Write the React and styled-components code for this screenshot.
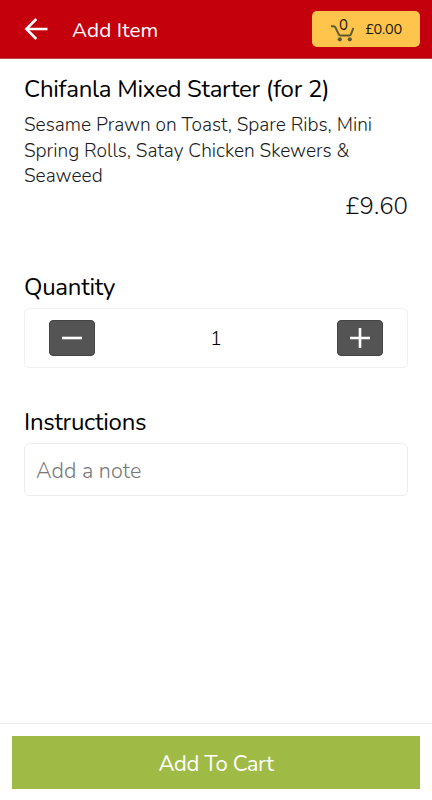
import { useState } from "react";
import styled, { createGlobalStyle } from "styled-components";

const GlobalStyle = createGlobalStyle`
    * {
        box-sizing: border-box;
    }
    body {
        margin: 0;
        background-color: #fff;
        color: #000;
        font-family: Nunito, "Open Sans", "Noto Sans", sans-serif;
    }
    button, input {
        font-family: inherit;
    }
`
const Page = styled.div`
    width: 100%;
    height: 100vh;
    display: flex;
    flex-direction: column;
    background-color: #fff;
`
const Header = styled.header`
    height: 59px;
    padding: 0 12px 0 24px;
    display: flex;
    align-items: center;
    background-color: #c4000c;
    border-bottom: 1px solid #b8453f;
`
const BackButton = styled.button`
    width: 24px;
    height: 24px;
    padding: 0;
    border: none;
    background: none;
    cursor: pointer;
    svg {
        display: block;
    }
`
const HeaderTitle = styled.h1`
    flex: 1;
    margin: 1px 0 0 24px;
    font-size: 20.7px;
    font-weight: 400;
    line-height: 28px;
    letter-spacing: 0.1px;
    color: #fff;
`
const CartButton = styled.button`
    width: 108px;
    height: 36px;
    padding: 0 18px 0 19px;
    display: flex;
    align-items: center;
    justify-content: space-between;
    border: none;
    border-radius: 5px;
    background-color: #ffc44c;
    color: #1c1a10;
    cursor: pointer;
`
const CartIcon = styled.span`
    position: relative;
    width: 24px;
    height: 32px;
    svg {
        display: block;
    }
`
const CartCount = styled.span`
    position: absolute;
    top: 3px;
    left: 0;
    width: 25px;
    text-align: center;
    font-size: 15px;
    line-height: 18px;
`
const CartTotal = styled.span`
    margin-top: -1px;
    font-size: 14.5px;
    line-height: 20px;
    letter-spacing: -0.25px;
    white-space: nowrap;
`
const Content = styled.main`
    flex: 1;
    padding: 14px 24px 0;
`
const SectionTitle = styled.h2`
    margin: 0;
    font-size: 24px;
    font-weight: 400;
    line-height: 32px;
    letter-spacing: -0.26px;
    white-space: nowrap;
`
const Description = styled.p`
    margin: 8px 0 0;
    font-size: 19.15px;
    font-weight: 300;
    line-height: 25.6px;
    color: #1b1b1b;
    span {
        display: block;
        white-space: nowrap;
    }
`
const Price = styled.div`
    text-align: right;
    font-size: 24px;
    font-weight: 300;
    line-height: 32px;
    color: #111;
`
const Section = styled.section`
    margin-top: ${({ $gap }) => $gap};
`
const Stepper = styled.div`
    height: 60px;
    margin-top: 5px;
    padding: 0 24px;
    display: flex;
    align-items: center;
    justify-content: space-between;
    border: 1px solid #f1f1f1;
    border-radius: 5px;
`
const StepButton = styled.button`
    width: 46px;
    height: 36px;
    padding: 1px 0 0;
    display: flex;
    align-items: center;
    justify-content: center;
    border: 1px solid #444;
    border-radius: 4px;
    background-color: #545454;
    cursor: pointer;
`
const Quantity = styled.span`
    margin-top: 3px;
    font-size: 20px;
    font-weight: 300;
    line-height: 28px;
`
const NoteInput = styled.input`
    display: block;
    width: 100%;
    height: 53px;
    margin-top: 5px;
    padding: 4px 11px 0;
    border: 1px solid #ececec;
    border-radius: 6px;
    outline: none;
    font-size: 21.5px;
    font-weight: 300;
    letter-spacing: 0.1px;
    &::placeholder {
        color: #777;
        opacity: 1;
    }
`
const Footer = styled.footer`
    height: 77px;
    padding: 12px 12px 11px;
    border-top: 1px solid #efefef;
`
const AddButton = styled.button`
    width: 100%;
    height: 53px;
    padding: 2px 0 0;
    border: none;
    background-color: #a0bb45;
    font-size: 22px;
    font-weight: 400;
    letter-spacing: -0.35px;
    color: #fff;
    cursor: pointer;
`

const description = [
    "Sesame Prawn on Toast, Spare Ribs, Mini",
    "Spring Rolls, Satay Chicken Skewers &",
    "Seaweed",
];

const App = () => {
    const [quantity, setQuantity] = useState(1);
    const [note, setNote] = useState("");
    return (
        <>
            <GlobalStyle />
            <Page>
                <Header>
                    <BackButton aria-label="Back">
                        <svg width="24" height="24" viewBox="0 0 24 24" fill="none" stroke="#fff" strokeWidth="2.5">
                            <path d="M23.5 12H2.5M12.3 2 2.3 12l10 10" />
                        </svg>
                    </BackButton>
                    <HeaderTitle>Add Item</HeaderTitle>
                    <CartButton>
                        <CartIcon>
                            <svg width="24" height="32" viewBox="0 0 24 32" fill="none" stroke="#5c5930" strokeWidth="2">
                                <path d="M0 13.2h2.5q1.3 0 1.9 1.2l3.5 7.2q.4.8 1.3.8h9.4q.9 0 1.2-.8l2.6-6.6" />
                                <circle cx="8.8" cy="26.3" r="2.1" fill="#5c5930" stroke="none" />
                                <circle cx="18.8" cy="26.3" r="2.1" fill="#5c5930" stroke="none" />
                            </svg>
                            <CartCount>0</CartCount>
                        </CartIcon>
                        <CartTotal>£0.00</CartTotal>
                    </CartButton>
                </Header>
                <Content>
                    <SectionTitle>Chifanla Mixed Starter (for 2)</SectionTitle>
                    <Description>
                        {description.map((line) => (
                            <span key={line}>{line}</span>
                        ))}
                    </Description>
                    <Price>£9.60</Price>
                    <Section $gap="49px">
                        <SectionTitle>Quantity</SectionTitle>
                        <Stepper>
                            <StepButton aria-label="Less" onClick={() => setQuantity(Math.max(1, quantity - 1))}>
                                <svg width="20" height="20" viewBox="0 0 20 20" stroke="#fff" strokeWidth="2.6">
                                    <path d="M0 10h20" />
                                </svg>
                            </StepButton>
                            <Quantity>{quantity}</Quantity>
                            <StepButton aria-label="More" onClick={() => setQuantity(quantity + 1)}>
                                <svg width="20" height="20" viewBox="0 0 20 20" stroke="#fff" strokeWidth="2.6">
                                    <path d="M0 10h20M10 0v20" />
                                </svg>
                            </StepButton>
                        </Stepper>
                    </Section>
                    <Section $gap="38px">
                        <SectionTitle>Instructions</SectionTitle>
                        <NoteInput
                            placeholder="Add a note"
                            value={note}
                            onChange={(e) => setNote(e.target.value)}
                        />
                    </Section>
                </Content>
                <Footer>
                    <AddButton>Add To Cart</AddButton>
                </Footer>
            </Page>
        </>
    )
};

export default App;
